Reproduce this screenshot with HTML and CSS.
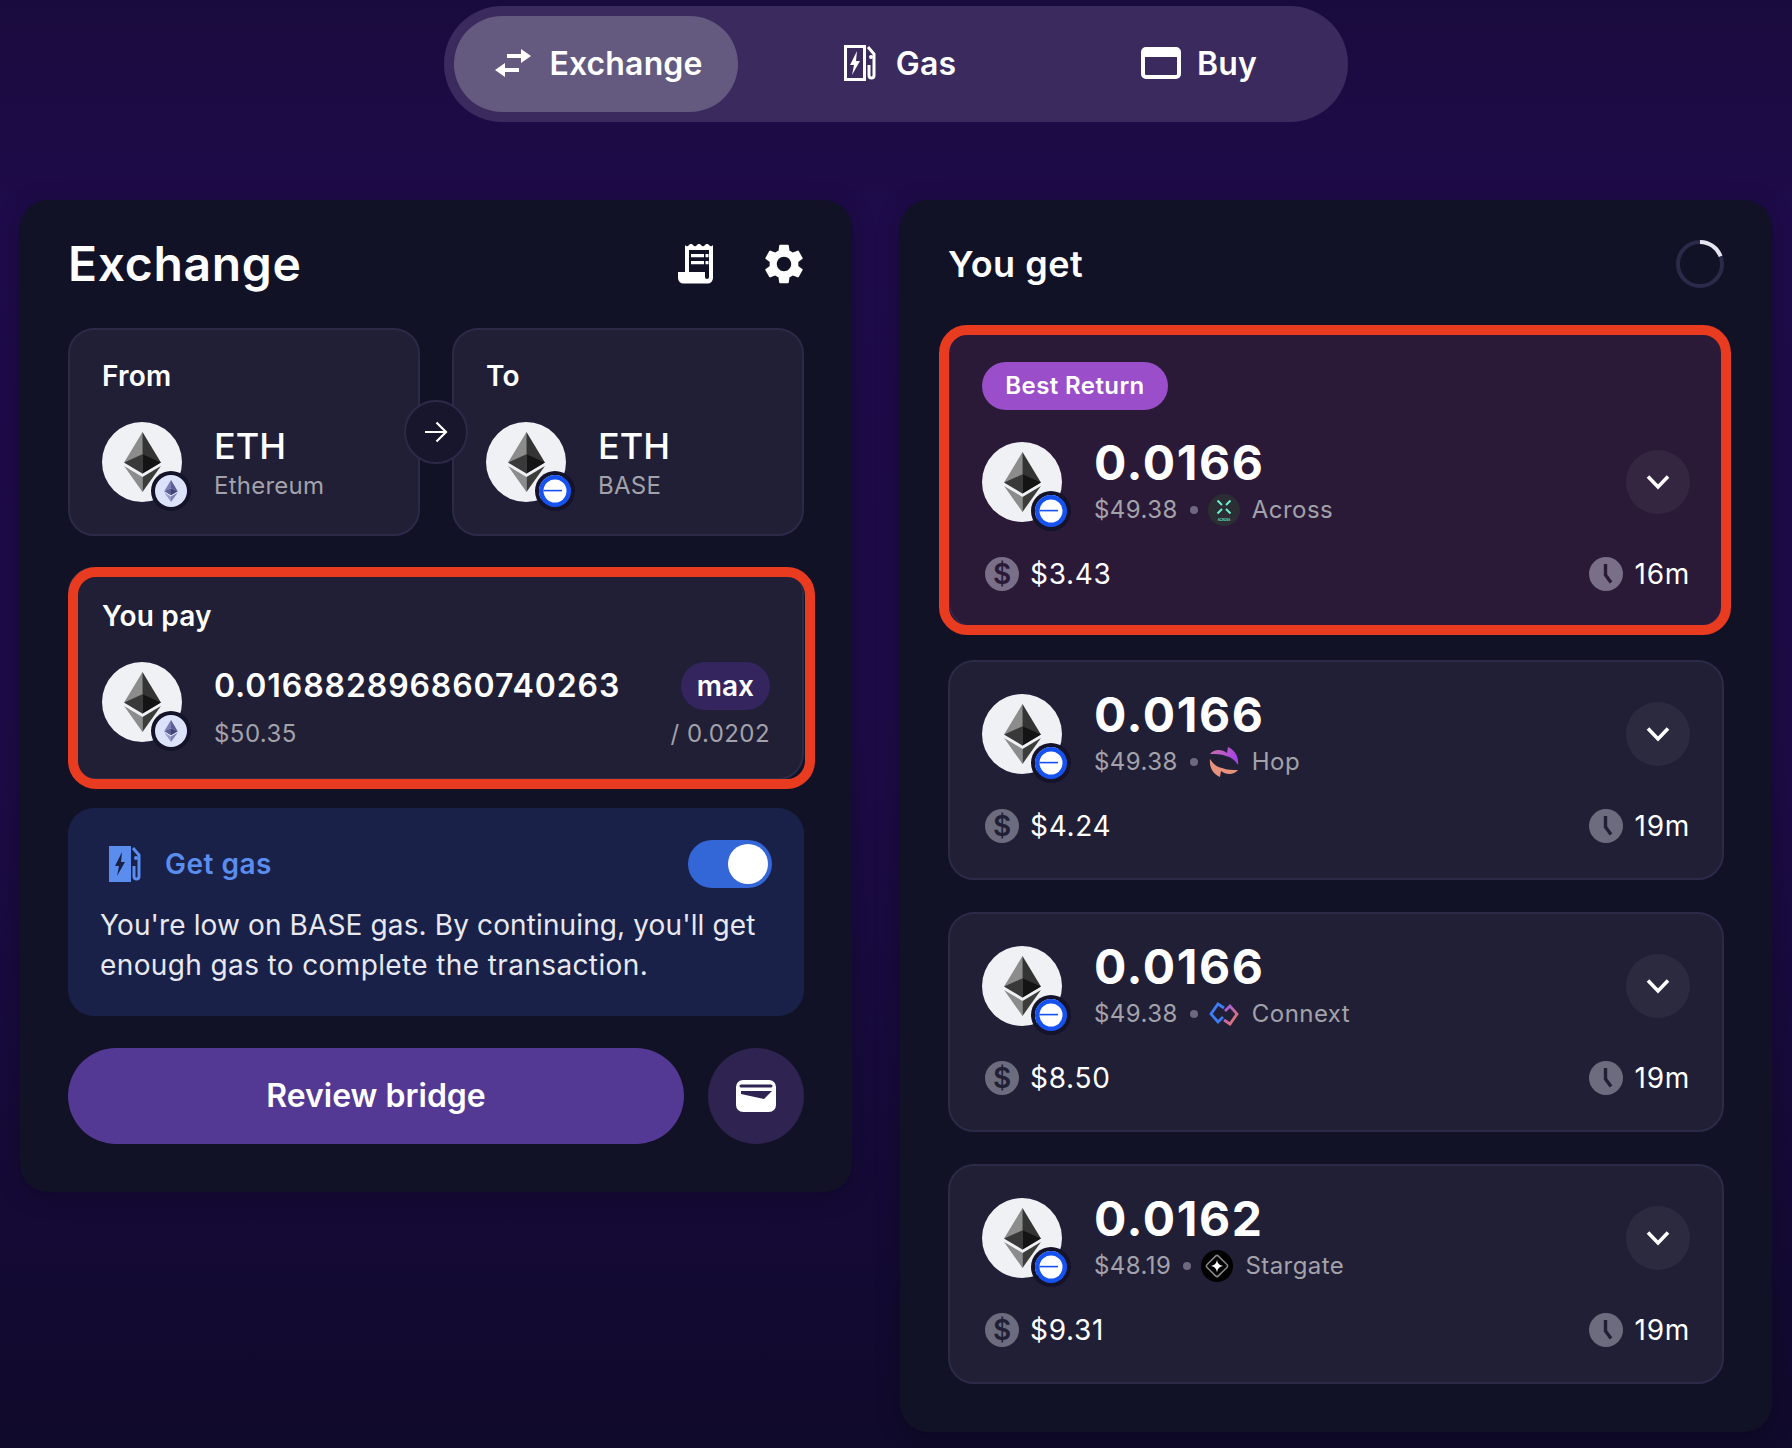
FILE: index.html
```html
<!DOCTYPE html>
<html lang="en">
<head>
    <meta charset="UTF-8">
    <meta name="viewport" content="width=device-width, initial-scale=1.0">
    <title>Exchange</title>
    <link rel="stylesheet" href="styles.css">
</head>
<body>

    <svg class="defs" width="0" height="0" aria-hidden="true">
        <symbol id="eth" viewBox="0 0 784.4 1277.4">
            <path fill="#343434" d="M392.07 0l-8.57 29.11v844.63l8.57 8.55 392.06-231.75z"/>
            <path fill="#8c8c8c" d="M392.06 0L0 650.54l392.06 231.75V472.33z"/>
            <path fill="#3c3c3b" d="M392.06 956.52l-4.83 5.89v300.87l4.83 14.1 392.3-552.49z"/>
            <path fill="#8c8c8c" d="M392.06 1277.38V956.52L0 724.89z"/>
            <path fill="#141414" d="M392.06 882.29l392.06-231.75-392.06-178.21z"/>
            <path fill="#393939" d="M0 650.54l392.06 231.75V472.33z"/>
        </symbol>
        <symbol id="eth-small" viewBox="0 0 784.4 1277.4">
            <path fill="#5b5f96" d="M392 0v472l392 178z"/>
            <path fill="#7b7fb4" d="M392 0L0 650l392-178z"/>
            <path fill="#3f4273" d="M392 472v410l392-232z"/>
            <path fill="#5b5f96" d="M392 472L0 650l392 232z"/>
            <path fill="#7b7fb4" d="M392 957v320l392-552z"/>
            <path fill="#9a9ecb" d="M392 1277V957L0 725z"/>
        </symbol>
        <symbol id="base" viewBox="0 0 32 32">
            <circle cx="16" cy="16" r="16" fill="#1652f0"/>
            <circle cx="16" cy="16" r="11.5" fill="#fff"/>
            <rect x="4.5" y="14.8" width="18.5" height="1.6" fill="#1652f0"/>
        </symbol>
        <symbol id="chevron" viewBox="0 0 24 16">
            <path d="M2 2.5l10 10.5 10-10.5" fill="none" stroke="#fff" stroke-width="3.6"/>
        </symbol>
        <symbol id="clock" viewBox="0 0 34 34">
            <circle cx="17" cy="17" r="17" fill="currentColor"/>
            <path d="M16.5 7v11l5.5 7.5" fill="none" stroke="var(--cut)" stroke-width="3.4"/>
        </symbol>
    </svg>

    <nav class="tabs">
        <a class="tab tab-active">
            <svg class="tab-icon" width="36" height="28" viewBox="0 0 36 28"><path fill="#fff" d="M36 7L26 0v5H12v4h14v5zM0 21l10-7v5h14v4H10v5z"/></svg>
            Exchange
        </a>
        <a class="tab tab-gas">
            <svg class="tab-icon" width="34" height="36" viewBox="0 0 34 36">
                <rect x="1.5" y="1.5" width="19" height="33" fill="none" stroke="#fff" stroke-width="3"/>
                <path fill="#fff" d="M13 6L6 20h4l-2 10 8-14h-4z"/>
                <path d="M24 2l6 7v21.5a2.5 2.5 0 0 1-5 0V20" fill="none" stroke="#fff" stroke-width="3"/>
                <circle cx="27" cy="12" r="2" fill="#fff"/>
            </svg>
            Gas
        </a>
        <a class="tab tab-buy">
            <svg class="tab-icon" width="40" height="32" viewBox="0 0 40 32">
                <rect x="2" y="2" width="36" height="28" rx="3" fill="none" stroke="#fff" stroke-width="4"/>
                <rect x="2" y="2" width="36" height="8" fill="#fff"/>
            </svg>
            Buy
        </a>
    </nav>

    <main class="panels">
        <section class="panel panel-left">
            <header class="panel-head">
                <h1>Exchange</h1>
                <div class="head-icons">
                    <svg width="36" height="40" viewBox="0 0 36 40">
                        <path fill="#fff" fill-rule="evenodd" d="M7 1q2 2.4 4 0t4 0 4 0 4 0 4 0 4 0 4 0v33a5.5 5.5 0 0 1-5.5 5.5h-24A5.5 5.5 0 0 1 0 34v-6h7zM11 6v22h16v5a2 2 0 0 0 4 0V6z"/>
                        <path fill="#fff" d="M13 10h13v3.2H13zM27.500 10h3v3.200h-3zM13 17h13v3.200H13zM27.500 17h3v3.200h-3z"/>
                    </svg>
                    <svg class="gear" width="48" height="48" viewBox="0 0 24 24">
                        <path fill="#fff" d="M19.140 12.940c.04-.3.06-.61.06-.94 0-.32-.02-.64-.07-.94l2.030-1.580c.18-.14.23-.41.12-.61l-1.920-3.320c-.12-.22-.37-.29-.59-.22l-2.390.96c-.5-.38-1.030-.7-1.620-.94l-.36-2.540c-.04-.24-.24-.41-.48-.41h-3.840c-.24 0-.43.17-.47.41l-.36 2.540c-.59.24-1.130.57-1.620.94l-2.390-.96c-.22-.08-.47 0-.59.22L2.740 8.870c-.12.21-.08.47.12.61l2.030 1.580c-.05.3-.09.63-.09.94s.02.64.07.94l-2.030 1.580c-.18.14-.23.41-.12.61l1.920 3.320c.12.22.37.29.59.22l2.390-.96c.5.38 1.030.7 1.620.94l.36 2.540c.05.24.24.41.48.41h3.840c.24 0 .44-.17.47-.41l.36-2.540c.59-.24 1.130-.56 1.620-.94l2.390.96c.22.08.47 0 .59-.22l1.920-3.320c.12-.22.07-.47-.12-.61l-2.010-1.580zM12 15.600c-1.980 0-3.600-1.620-3.600-3.600s1.620-3.600 3.600-3.600 3.600 1.620 3.600 3.600-1.620 3.600-3.600 3.600z"/>
                    </svg>
                </div>
            </header>

            <div class="pair">
                <div class="card pick">
                    <div class="label">From</div>
                    <div class="token-row">
                        <div class="avatar">
                            <svg class="eth" width="37" height="60"><use href="#eth"/></svg>
                            <span class="badge badge-eth"><svg width="14" height="22"><use href="#eth-small"/></svg></span>
                        </div>
                        <div class="token-text">
                            <div class="token-name">ETH</div>
                            <div class="muted">Ethereum</div>
                        </div>
                    </div>
                </div>
                <div class="swap">
                    <svg width="24" height="22" viewBox="0 0 24 22"><path d="M1 11h21M12.500 1.500L22 11l-9.500 9.500" fill="none" stroke="#fff" stroke-width="2.200"/></svg>
                </div>
                <div class="card pick">
                    <div class="label">To</div>
                    <div class="token-row">
                        <div class="avatar">
                            <svg class="eth" width="37" height="60"><use href="#eth"/></svg>
                            <span class="badge"><svg width="32" height="32"><use href="#base"/></svg></span>
                        </div>
                        <div class="token-text">
                            <div class="token-name">ETH</div>
                            <div class="muted">BASE</div>
                        </div>
                    </div>
                </div>
            </div>

            <div class="card pay">
                <span class="flag flag-pay"></span>
                <div class="label">You pay</div>
                <div class="pay-row">
                    <div class="avatar">
                        <svg class="eth" width="37" height="60"><use href="#eth"/></svg>
                        <span class="badge badge-eth"><svg width="14" height="22"><use href="#eth-small"/></svg></span>
                    </div>
                    <div class="pay-text">
                        <div class="pay-amount">0.016882896860740263</div>
                        <div class="muted">$50.35</div>
                    </div>
                    <div class="pay-side">
                        <span class="max">max</span>
                        <div class="muted">/ 0.0202</div>
                    </div>
                </div>
            </div>

            <div class="gas">
                <div class="gas-head">
                    <svg class="gas-icon" width="36" height="36" viewBox="0 0 34 36">
                        <rect x="0" y="0" width="22" height="36" fill="#5b8def"/>
                        <path fill="#192148" d="M13 6L6 20h4l-2 10 8-14h-4z"/>
                        <path d="M24 2l6 7v21.500a2.500 2.500 0 0 1-5 0V20" fill="none" stroke="#5b8def" stroke-width="3"/>
                        <circle cx="27" cy="12" r="2" fill="#5b8def"/>
                    </svg>
                    <span class="gas-title">Get gas</span>
                    <span class="toggle"><span class="knob"></span></span>
                </div>
                <p class="gas-text">You're low on BASE gas. By continuing, you'll get <span class="gas-line">enough gas to complete the transaction.</span></p>
            </div>

            <div class="actions">
                <button class="review">Review bridge</button>
                <button class="wallet">
                    <svg width="40" height="32" viewBox="0 0 40 32">
                        <rect width="40" height="32" rx="7" fill="#fff"/>
                        <path d="M5 6h30" stroke="#2f2352" stroke-width="3" stroke-linecap="round"/>
                        <path fill="#2f2352" d="M5 11h31l-8 8L5 14z"/>
                    </svg>
                </button>
            </div>
        </section>

        <section class="panel panel-right">
            <header class="panel-head">
                <h2>You get</h2>
                <svg width="48" height="48" viewBox="0 0 48 48">
                    <circle cx="24" cy="24" r="22" fill="none" stroke="#2b2a48" stroke-width="4"/>
                    <path d="M24 2a22 22 0 0 1 20.600 14.300" fill="none" stroke="#e6e4f0" stroke-width="4"/>
                </svg>
            </header>

            <div class="routes">
                <article class="card route route-best">
                    <span class="flag flag-best"></span>
                    <span class="best-tag">Best Return</span>
                    <div class="route-top">
                        <div class="avatar">
                            <svg class="eth" width="37" height="60"><use href="#eth"/></svg>
                            <span class="badge"><svg width="32" height="32"><use href="#base"/></svg></span>
                        </div>
                        <div class="route-text">
                            <div class="route-amount">0.0166</div>
                            <div class="route-sub muted">
                                <span>$49.38</span><i class="dot"></i>
                                <svg class="logo" width="32" height="32" viewBox="0 0 32 32">
                                    <circle cx="16" cy="16" r="16" fill="#2b2e33"/>
                                    <path d="M9.500 6.500l4.500 4.500M22.500 6.500L18 11M9.500 19.500L14 15M22.500 19.500L18 15" stroke="#6cf0cf" stroke-width="2"/>
                                    <text class="across-mark" x="16" y="26.500" text-anchor="middle">ACROSS</text>
                                </svg>
                                <span>Across</span>
                            </div>
                        </div>
                        <span class="more"><svg width="24" height="16"><use href="#chevron"/></svg></span>
                    </div>
                    <div class="route-foot">
                        <span class="stat"><span class="coin">$</span>$3.43</span>
                        <span class="stat"><svg class="clock" width="34" height="34"><use href="#clock"/></svg>16m</span>
                    </div>
                </article>

                <article class="card route">
                    <div class="route-top">
                        <div class="avatar">
                            <svg class="eth" width="37" height="60"><use href="#eth"/></svg>
                            <span class="badge"><svg width="32" height="32"><use href="#base"/></svg></span>
                        </div>
                        <div class="route-text">
                            <div class="route-amount">0.0166</div>
                            <div class="route-sub muted">
                                <span>$49.38</span><i class="dot"></i>
                                <svg class="logo" width="32" height="32" viewBox="0 0 32 32">
                                    <defs><linearGradient id="hop" x1="0" y1="0" x2="1" y2="0.400"><stop offset="0" stop-color="#cf6fa8"/><stop offset="1" stop-color="#a644e6"/></linearGradient></defs>
                                    <path fill="url(#hop)" d="M2 8C6 3 14 3 19 7l1-6c6 3 11 8 10 18-3-5-7-8-12-9-5-2-11-2-16-2z"/>
                                    <path fill="#e8927c" d="M2 8C6 3 14 3 19 7l1-6c6 3 11 8 10 18-3-5-7-8-12-9-5-2-11-2-16-2z" transform="rotate(180 16 16)"/>
                                </svg>
                                <span>Hop</span>
                            </div>
                        </div>
                        <span class="more"><svg width="24" height="16"><use href="#chevron"/></svg></span>
                    </div>
                    <div class="route-foot">
                        <span class="stat"><span class="coin">$</span>$4.24</span>
                        <span class="stat"><svg class="clock" width="34" height="34"><use href="#clock"/></svg>19m</span>
                    </div>
                </article>

                <article class="card route">
                    <div class="route-top">
                        <div class="avatar">
                            <svg class="eth" width="37" height="60"><use href="#eth"/></svg>
                            <span class="badge"><svg width="32" height="32"><use href="#base"/></svg></span>
                        </div>
                        <div class="route-text">
                            <div class="route-amount">0.0166</div>
                            <div class="route-sub muted">
                                <span>$49.38</span><i class="dot"></i>
                                <svg class="logo" width="32" height="32" viewBox="0 0 32 32">
                                    <defs><linearGradient id="cnx" x1="0" y1="0" x2="1" y2="1"><stop offset="0" stop-color="#9a5cf0"/><stop offset="1" stop-color="#f0785a"/></linearGradient></defs>
                                    <path d="M16 10l-6-4-7 10 7 8 5-5" fill="none" stroke="#3d7df5" stroke-width="2.800"/>
                                    <path d="M16 22l6 4 7-10-7-8-5 5" fill="none" stroke="url(#cnx)" stroke-width="2.800"/>
                                </svg>
                                <span>Connext</span>
                            </div>
                        </div>
                        <span class="more"><svg width="24" height="16"><use href="#chevron"/></svg></span>
                    </div>
                    <div class="route-foot">
                        <span class="stat"><span class="coin">$</span>$8.50</span>
                        <span class="stat"><svg class="clock" width="34" height="34"><use href="#clock"/></svg>19m</span>
                    </div>
                </article>

                <article class="card route">
                    <div class="route-top">
                        <div class="avatar">
                            <svg class="eth" width="37" height="60"><use href="#eth"/></svg>
                            <span class="badge"><svg width="32" height="32"><use href="#base"/></svg></span>
                        </div>
                        <div class="route-text">
                            <div class="route-amount">0.0162</div>
                            <div class="route-sub muted">
                                <span>$48.19</span><i class="dot"></i>
                                <svg class="logo" width="32" height="32" viewBox="0 0 32 32">
                                    <circle cx="16" cy="16" r="16" fill="#000"/>
                                    <rect x="8" y="8" width="16" height="16" rx="2" fill="none" stroke="#8a8a8a" stroke-width="1.500" transform="rotate(45 16 16)"/>
                                    <path fill="#fff" d="M16 9.500c.5 4 2.500 6 6.500 6.500-4 .5-6 2.500-6.500 6.500-.5-4-2.500-6-6.500-6.500 4-.5 6-2.500 6.500-6.500z"/>
                                </svg>
                                <span>Stargate</span>
                            </div>
                        </div>
                        <span class="more"><svg width="24" height="16"><use href="#chevron"/></svg></span>
                    </div>
                    <div class="route-foot">
                        <span class="stat"><span class="coin">$</span>$9.31</span>
                        <span class="stat"><svg class="clock" width="34" height="34"><use href="#clock"/></svg>19m</span>
                    </div>
                </article>
            </div>
        </section>
    </main>

</body>
</html>
```

FILE: styles.css
```css
* {
    box-sizing: border-box;
}
body {
    margin: 0;
    min-height: 100vh;
    padding-top: 6px;
    font-family: Inter, "Liberation Sans", sans-serif;
    color: #fff;
    background: linear-gradient(180deg, #1a0b3e 0, #1e0b4a 15%, #1d0b47 50%, #140a35 85%, #100a2b 100%);
}
.defs {
    display: block;
    height: 0;
}

/* top tabs */
.tabs {
    display: grid;
    grid-template-columns: repeat(3, 1fr);
    gap: 16px;
    width: 904px;
    height: 116px;
    margin: 0 auto;
    padding: 10px;
    border-radius: 58px;
    background: #3a2a5e;
}
.tab {
    display: flex;
    align-items: center;
    justify-content: center;
    gap: 18px;
    height: 96px;
    padding: 0 0 2px 6px;
    border-radius: 48px;
    font-size: 32px;
    font-weight: 600;
    letter-spacing: 0.15px;
}
.tab-active {
    background: #645a80;
}
.tab-gas {
    padding-left: 8px;
}
.tab-buy {
    gap: 16px;
}

/* panels */
.panels {
    display: flex;
    align-items: flex-start;
    gap: 48px;
    padding: 78px 20px 0;
}
.panel {
    padding: 40px 48px 48px;
    border-radius: 28px;
    background: #121226;
    box-shadow: 0 4px 24px rgba(0, 0, 0, 0.25);
}
.panel-left {
    width: 832px;
}
.panel-right {
    width: 872px;
}
.panel-head {
    display: flex;
    align-items: center;
    justify-content: space-between;
    height: 48px;
    margin-bottom: 40px;
}
h1, h2 {
    margin: 0;
    font-weight: 600;
}
h1 {
    font-size: 48px;
    line-height: 48px;
    letter-spacing: 0.7px;
}
h2 {
    font-size: 36px;
    line-height: 48px;
    letter-spacing: 0.5px;
}
.head-icons {
    display: flex;
    align-items: center;
    gap: 46px;
}
.gear {
    margin-right: -4px;
}

/* cards */
.card {
    position: relative;
    border: 2px solid #2b2a48;
    border-radius: 26px;
    background: #201f35;
}
.label {
    font-size: 28px;
    font-weight: 600;
    line-height: 40px;
    letter-spacing: 0.2px;
}
.muted {
    font-size: 24px;
    line-height: 32px;
    letter-spacing: 0.45px;
    color: #a3a2aa;
}
.pair {
    display: flex;
    position: relative;
    justify-content: space-between;
    margin-bottom: 31px;
}
.pick {
    width: 352px;
    height: 208px;
    padding: 26px 32px 0;
}
.token-row {
    display: flex;
    align-items: center;
    gap: 32px;
    margin-top: 26px;
}
.token-text {
    padding-top: 4px;
}
.token-text .muted {
    letter-spacing: 0.25px;
}
.avatar {
    position: relative;
    display: flex;
    flex: none;
    align-items: center;
    justify-content: center;
    width: 80px;
    height: 80px;
    border-radius: 50%;
    background: #f0f1f5;
}
.badge {
    position: absolute;
    right: -5px;
    bottom: -5px;
    display: flex;
    align-items: center;
    justify-content: center;
    width: 32px;
    height: 32px;
    border-radius: 50%;
    box-shadow: 0 0 0 4px #14132a;
}
.badge svg {
    display: block;
}
.badge-eth {
    background: #dde2fb;
}
.token-name {
    margin-bottom: 4px;
    font-size: 36px;
    font-weight: 500;
    line-height: 40px;
}
.swap {
    position: absolute;
    z-index: 1;
    top: 72px;
    left: 336px;
    display: flex;
    align-items: center;
    justify-content: center;
    width: 64px;
    height: 64px;
    border: 2px solid #2b2a48;
    border-radius: 50%;
    background: #17162c;
}

/* you pay */
.pay {
    height: 213px;
    margin-bottom: 28px;
    padding: 27px 32px 0;
}
.pay-row {
    display: flex;
    gap: 32px;
    margin-top: 26px;
}
.pay-text {
    flex: 1;
    padding-top: 4px;
}
.pay-amount {
    margin-bottom: 12px;
    font-size: 32px;
    font-weight: 600;
    line-height: 40px;
    letter-spacing: 0.9px;
}
.pay-side {
    display: flex;
    flex-direction: column;
    align-items: flex-end;
    gap: 8px;
}
.max {
    height: 48px;
    padding: 0 16px;
    border-radius: 24px;
    background: #35255e;
    font-size: 28px;
    font-weight: 600;
    line-height: 48px;
}

/* red marks on the screenshot */
.flag {
    position: absolute;
    border: 10px solid #e93b1f;
    border-radius: 28px;
    pointer-events: none;
}
.flag-pay {
    top: -2px;
    right: -13px;
    bottom: -11px;
    left: -2px;
}
.flag-best {
    top: -5px;
    right: -9px;
    bottom: -9px;
    left: -11px;
}

/* get gas */
.gas {
    height: 208px;
    margin-bottom: 32px;
    padding: 32px 32px 0;
    border-radius: 26px;
    background: #192148;
}
.gas-head {
    display: flex;
    align-items: center;
    gap: 21px;
    height: 48px;
    margin-bottom: 17px;
}
.gas-icon {
    margin-left: 8px;
}
.gas-title {
    flex: 1;
    font-size: 28px;
    font-weight: 600;
    letter-spacing: 0.5px;
    color: #5b8def;
}
.toggle {
    display: flex;
    justify-content: flex-end;
    width: 84px;
    height: 48px;
    padding: 4px;
    border-radius: 24px;
    background: #3366d6;
}
.knob {
    width: 40px;
    height: 40px;
    border-radius: 50%;
    background: #fff;
}
.gas-text {
    margin: 0;
    font-size: 28px;
    line-height: 40px;
    letter-spacing: 0.12px;
    color: #e8e8f0;
}
.gas-line {
    letter-spacing: 0.38px;
}

/* buttons */
.actions {
    display: flex;
    gap: 24px;
}
button {
    height: 96px;
    border: 0;
    font-family: inherit;
    color: #fff;
}
.review {
    flex: 1;
    padding-bottom: 2px;
    border-radius: 48px;
    background: #533894;
    font-size: 32px;
    font-weight: 600;
}
.wallet {
    display: flex;
    align-items: center;
    justify-content: center;
    width: 96px;
    padding: 0;
    border-radius: 50%;
    background: #2f2352;
}

/* routes */
.routes {
    display: flex;
    flex-direction: column;
    gap: 32px;
}
.route {
    height: 220px;
    padding: 32px;
}
.route-best {
    height: 300px;
    border-color: #38234f;
    background: #2a1a37;
}
.best-tag {
    display: block;
    width: 186px;
    height: 48px;
    margin-bottom: 32px;
    border-radius: 24px;
    background: #9a4ec9;
    font-size: 24px;
    font-weight: 600;
    line-height: 48px;
    letter-spacing: 0.4px;
    text-align: center;
}
.route-top {
    display: flex;
    align-items: center;
    gap: 32px;
    height: 80px;
}
.route-text {
    flex: 1;
}
.route-amount {
    margin-bottom: 7px;
    padding-top: 1px;
    font-size: 48px;
    font-weight: 700;
    line-height: 48px;
    letter-spacing: 1.6px;
}
.route-sub {
    display: flex;
    align-items: center;
}
.dot {
    flex: none;
    width: 8px;
    height: 8px;
    margin: 0 10px 0 12px;
    border-radius: 50%;
    background: #6d6880;
}
.logo {
    flex: none;
    margin-right: 12px;
}
.across-mark {
    font-size: 3px;
    font-weight: 600;
    letter-spacing: 0;
    fill: #6cf0cf;
}
.more {
    display: flex;
    align-items: center;
    justify-content: center;
    width: 64px;
    height: 64px;
    border-radius: 50%;
    background: rgba(255, 255, 255, 0.05);
}
.route-foot {
    display: flex;
    justify-content: space-between;
    margin-top: 35px;
}
.stat {
    display: flex;
    align-items: center;
    gap: 11px;
    height: 34px;
    font-size: 28px;
    line-height: 34px;
    letter-spacing: 0.7px;
    --cut: #201f35;
    color: #fff;
}
.coin {
    flex: none;
    width: 34px;
    height: 34px;
    margin-left: 3px;
    border-radius: 50%;
    background: #6d6c7e;
    font-size: 28px;
    font-weight: 600;
    line-height: 34px;
    letter-spacing: 0;
    text-align: center;
    color: #201f35;
}
.clock {
    color: #6d6c7e;
    margin-right: 1px;
}
.route-best .stat {
    --cut: #2a1a37;
}
.route-best .coin {
    background: #7a6f88;
    color: #2a1a37;
}
.route-best .clock {
    color: #7a6f88;
}
```
